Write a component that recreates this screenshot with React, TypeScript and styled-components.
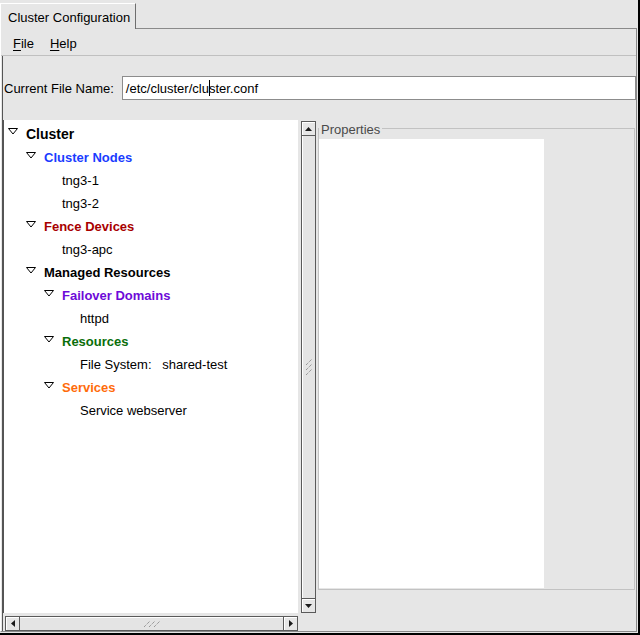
import React from 'react';
import styled, { createGlobalStyle } from 'styled-components';

const Global = createGlobalStyle`
  html, body { margin: 0; padding: 0; background: #e6e6e6; }
  body {
    font-family: "Liberation Sans", Arial, sans-serif;
    font-size: 13px;
    color: #000;
  }
  * { box-sizing: border-box; }
`;

const Window = styled.div`
  width: 640px;
  height: 635px;
  background: #e6e6e6;
  border-right: 2px solid #000;
  border-bottom: 2px solid #000;
  padding: 0 1px 1px 0;
  display: flex;
  flex-direction: column;
  overflow: hidden;
`;

const TabStrip = styled.div`
  height: 28px;
  flex: none;
  display: flex;
  align-items: flex-end;
`;

const Tab = styled.div`
  position: relative;
  z-index: 1;
  height: 26px;
  margin-bottom: -1px;
  padding: 2px 5px 0 7px;
  display: flex;
  align-items: center;
  background: #e6e6e6;
  border-top: 1px solid #fff;
  border-left: 1px solid #fff;
  border-right: 1px solid #6e6e6e;
  white-space: nowrap;
`;

const Page = styled.div`
  flex: 1;
  min-height: 0;
  display: flex;
  flex-direction: column;
  border-top: 1px solid #8a8a8a;
  border-right: 1px solid #8a8a8a;
  border-bottom: 1px solid #8a8a8a;
  border-left: 1px solid #fff;
`;

const MenuBar = styled.div`
  flex: none;
  height: 27px;
  padding: 3px 0 0 4px;
  display: flex;
  align-items: center;
  border-bottom: 1px solid #c0c0c0;
`;

const MenuItem = styled.div`
  padding: 0 8px;
  white-space: nowrap;
  u { text-decoration: underline; text-underline-offset: 2px; }
`;

const Body = styled.div`
  flex: 1;
  min-height: 0;
  margin-left: 1px;
  border-left: 1px solid #555;
  display: flex;
  flex-direction: column;
`;

const FileRow = styled.div`
  flex: none;
  height: 64px;
  padding-left: 1px;
  display: flex;
  align-items: center;
  gap: 8px;
`;

const FieldLabel = styled.span`
  flex: none;
  white-space: nowrap;
`;

const Entry = styled.div`
  flex: 1;
  height: 24px;
  background: #fff;
  border: 1px solid #8c8c8c;
  padding-left: 3px;
  display: flex;
  align-items: center;
  white-space: nowrap;
`;

const Caret = styled.span`
  display: inline-block;
  width: 1px;
  height: 16px;
  margin-right: -1px;
  background: #000;
  vertical-align: middle;
`;

const Content = styled.div`
  flex: 1;
  min-height: 0;
  display: flex;
`;

const LeftPane = styled.div`
  flex: none;
  width: 313px;
  display: grid;
  grid-template-columns: 295px 3px 15px;
  grid-template-rows: 493px 3px 15px;
`;

const TreeView = styled.div`
  grid-area: 1 / 1;
  background: #fff;
  border-left: 1px solid #555;
  padding-top: 1px;
  overflow: hidden;
`;

const Row = styled.div<{ $pad: number; $h: number }>`
  display: flex;
  align-items: center;
  height: ${(p) => p.$h}px;
  padding-left: ${(p) => p.$pad}px;
  white-space: pre;
`;

const Expander = styled.span`
  flex: none;
  width: 19px;
  display: flex;
  align-items: center;
  padding-left: 1px;
  transform: translateY(-2px);
`;

const NodeLabel = styled.span<{ $color: string; $bold: boolean; $big: boolean }>`
  color: ${(p) => p.$color};
  font-weight: ${(p) => (p.$bold ? 700 : 400)};
  font-size: ${(p) => (p.$big ? 14 : 13)}px;
`;

const VScroll = styled.div`
  grid-area: 1 / 3;
  display: flex;
  flex-direction: column;
  padding-top: 1px;
`;

const HScroll = styled.div`
  grid-area: 3 / 1;
  margin-left: 2px;
  display: flex;
`;

const ScrollButton = styled.div`
  flex: none;
  width: 15px;
  height: 15px;
  display: flex;
  align-items: center;
  justify-content: center;
  background: #e6e6e6;
  border: 1px solid #5a5a5a;
  box-shadow: inset 1px 1px 0 #fff;
`;

const VThumb = styled.div`
  flex: 1;
  display: flex;
  align-items: center;
  justify-content: center;
  background: #e4e4e4;
  border-left: 1px solid #5a5a5a;
  border-right: 1px solid #5a5a5a;
  box-shadow: inset 1px 0 0 #fff;
`;

const HThumb = styled.div`
  flex: 1;
  display: flex;
  align-items: center;
  justify-content: center;
  background: #e4e4e4;
  border-top: 1px solid #5a5a5a;
  border-bottom: 1px solid #5a5a5a;
  box-shadow: inset 0 1px 0 #fff;
`;

const RightPane = styled.div`
  flex: 1;
  min-width: 0;
  display: flex;
  padding: 0 1px 41px 2px;
`;

const Frame = styled.fieldset`
  flex: 1;
  margin: 0;
  padding: 0 0 1px 0;
  border: 1px solid #c2c2c2;
  display: flex;
  flex-direction: column;
  min-width: 0;
`;

const FrameLabel = styled.legend`
  padding: 4px 2px 0 2px;
  margin: 0;
  line-height: 12px;
  font-size: 13px;
  color: #4a4a4a;
`;

const PropertiesArea = styled.div`
  flex: 1;
  width: 225px;
  margin: 3px 0 0 0;
  background: #fff;
`;

const TreeTriangle = () => (
  <svg width="10" height="7" viewBox="0 0 10 7">
    <path d="M0.5 0.5 H9.5 L5 6 Z" fill="#fff" stroke="#000" strokeWidth="1" strokeLinejoin="miter" />
  </svg>
);

const Arrow = ({ dir }: { dir: 'up' | 'down' | 'left' | 'right' }) => {
  const paths: Record<string, string> = {
    up: 'M3.5 0 L7 4 H0 Z',
    down: 'M0 0 H7 L3.5 4 Z',
    left: 'M0 3.5 L4 0 V7 Z',
    right: 'M0 0 L4 3.5 L0 7 Z',
  };
  const vertical = dir === 'up' || dir === 'down';
  return (
    <svg width={vertical ? 7 : 4} height={vertical ? 4 : 7} viewBox={vertical ? '0 0 7 4' : '0 0 4 7'}>
      <path d={paths[dir]} fill="#1a1a1a" />
    </svg>
  );
};

const VGrip = () => (
  <svg width="8" height="16" viewBox="0 0 8 16">
    {[0, 5, 10].map((y) => (
      <line key={y} x1="1" y1={y + 6} x2="7" y2={y} stroke="#7a7a7a" strokeWidth="1" strokeDasharray="1 1" />
    ))}
  </svg>
);

const HGrip = () => (
  <svg width="16" height="8" viewBox="0 0 16 8">
    {[0, 5, 10].map((x) => (
      <line key={x} x1={x} y1="7" x2={x + 6} y2="1" stroke="#7a7a7a" strokeWidth="1" strokeDasharray="1 1" />
    ))}
  </svg>
);

type TreeNode = {
  level: number;
  label: string;
  expand?: boolean;
  color?: string;
  bold?: boolean;
  big?: boolean;
};

const nodes: TreeNode[] = [
  { level: 0, label: 'Cluster', expand: true, bold: true, big: true },
  { level: 1, label: 'Cluster Nodes', expand: true, bold: true, color: '#1a3cff' },
  { level: 2, label: 'tng3-1' },
  { level: 2, label: 'tng3-2' },
  { level: 1, label: 'Fence Devices', expand: true, bold: true, color: '#a80000' },
  { level: 2, label: 'tng3-apc' },
  { level: 1, label: 'Managed Resources', expand: true, bold: true },
  { level: 2, label: 'Failover Domains', expand: true, bold: true, color: '#6e0ad8' },
  { level: 3, label: 'httpd' },
  { level: 2, label: 'Resources', expand: true, bold: true, color: '#0a6e0a' },
  { level: 3, label: 'File System:   shared-test' },
  { level: 2, label: 'Services', expand: true, bold: true, color: '#ff6c0a' },
  { level: 3, label: 'Service webserver' },
];

export default function App() {
  return (
    <>
      <Global />
      <Window>
        <TabStrip>
          <Tab>Cluster Configuration</Tab>
        </TabStrip>
        <Page>
          <MenuBar>
            <MenuItem>
              <u>F</u>ile
            </MenuItem>
            <MenuItem>
              <u>H</u>elp
            </MenuItem>
          </MenuBar>
          <Body>
            <FileRow>
              <FieldLabel>Current File Name:</FieldLabel>
              <Entry>
                /etc/cluster/clu
                <Caret />
                ster.conf
              </Entry>
            </FileRow>
            <Content>
              <LeftPane>
                <TreeView>
                  {nodes.map((n, i) => (
                    <Row key={i} $h={n.big ? 25 : 23} $pad={3 + 18 * n.level + (n.expand ? 0 : 19)}>
                      {n.expand && (
                        <Expander>
                          <TreeTriangle />
                        </Expander>
                      )}
                      <NodeLabel $color={n.color ?? '#000'} $bold={!!n.bold} $big={!!n.big}>
                        {n.label}
                      </NodeLabel>
                    </Row>
                  ))}
                </TreeView>
                <VScroll>
                  <ScrollButton>
                    <Arrow dir="up" />
                  </ScrollButton>
                  <VThumb>
                    <VGrip />
                  </VThumb>
                  <ScrollButton>
                    <Arrow dir="down" />
                  </ScrollButton>
                </VScroll>
                <HScroll>
                  <ScrollButton>
                    <Arrow dir="left" />
                  </ScrollButton>
                  <HThumb>
                    <HGrip />
                  </HThumb>
                  <ScrollButton>
                    <Arrow dir="right" />
                  </ScrollButton>
                </HScroll>
              </LeftPane>
              <RightPane>
                <Frame>
                  <FrameLabel>Properties</FrameLabel>
                  <PropertiesArea />
                </Frame>
              </RightPane>
            </Content>
          </Body>
        </Page>
      </Window>
    </>
  );
}
